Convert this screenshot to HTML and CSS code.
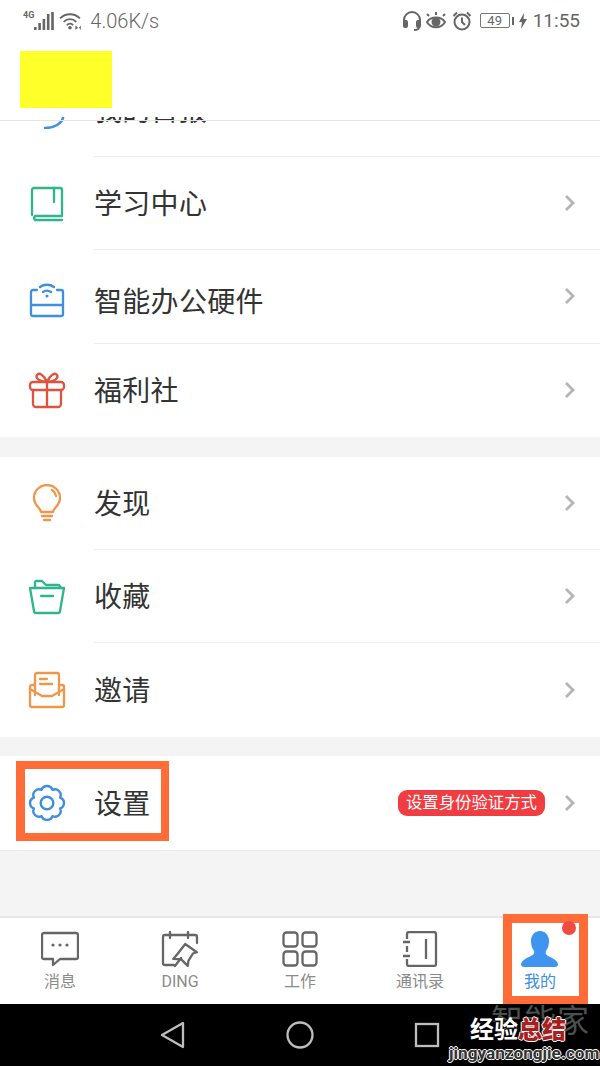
FILE: index.html
```html
<!DOCTYPE html>
<html lang="zh-CN">
<head>
    <meta charset="UTF-8">
    <title>我的</title>
    <link rel="stylesheet" href="styles.css">
</head>
<body>
    <div class="phone">
        <div class="status">
            <div class="status-side">
                <span class="net">4G</span>
                <svg width="20" height="18" viewBox="0 0 20 18"><g fill="#666"><rect x="0" y="15" width="2.600" height="3"/><rect x="4.300" y="11" width="2.600" height="7"/><rect x="8.600" y="7" width="2.600" height="11"/><rect x="12.900" y="2" width="2.600" height="16"/><rect x="17.200" y="0" width="2.600" height="18"/></g></svg>
                <svg width="22" height="18" viewBox="0 0 24 20" fill="none" stroke="#666" stroke-width="2"><path d="M1 7c6-6 16-6 22 0"/><path d="M5 11c4-4 10-4 14 0"/><path d="M8.500 14.500c2-2 5-2 7 0"/><circle cx="12" cy="17.500" r="2" fill="#666" stroke="none"/><path d="M18 15v5l3-2.500zM24 15v5l-2-2.500z" fill="#666" stroke="none"/></svg>
                <span class="speed">4.06K/s</span>
            </div>
            <div class="status-side">
                <svg width="20" height="22" viewBox="0 0 20 22" fill="none" stroke="#666" stroke-width="2"><path d="M2 14V10a8 8 0 0 1 16 0v4"/><rect x="2" y="11" width="3" height="6" rx="1" fill="#666"/><rect x="15" y="11" width="3" height="6" rx="1" fill="#666"/><path d="M17 17c0 2-2 3-5 3"/></svg>
                <svg class="eye" width="22" height="20" viewBox="0 0 22 20" fill="none" stroke="#666" stroke-width="2"><path d="M2 11c4-6 14-6 18 0-4 7-14 7-18 0z"/><circle cx="11" cy="11" r="3.500" fill="#666"/><path d="M4 5 2 3M11 4V1M18 5l2-2"/></svg>
                <svg width="20" height="20" viewBox="0 0 20 20" fill="none" stroke="#666" stroke-width="2"><circle cx="10" cy="11" r="7.500"/><path d="M10 6.500V11l3 3M1.500 5 5 1.500M18.500 5 15 1.500"/></svg>
                <div class="batt"><span class="batt-box">49</span><i class="batt-tip"></i></div>
                <svg width="8" height="16" viewBox="0 0 8 16"><path d="M5 0 0 9h3l-1 7 6-10H4.500z" fill="#666"/></svg>
                <span class="clock">11:55</span>
            </div>
        </div>

        <div class="head">
            <div class="head-mask"></div>
        </div>

        <div class="scroller">
            <div class="group group-clip">
                <div class="row row-cut">
                    <div class="ico">
                        <svg width="38" height="38" viewBox="0 0 38 38" fill="none" stroke="#3f8fdf" stroke-width="2.500" stroke-linecap="round"><path d="M35 27c-2 6-9 10-18 10"/></svg>
                    </div>
                    <div class="row-body"><span class="label">我的日报</span></div>
                </div>
            </div>
            <div class="group group-top">
                <div class="row">
                    <div class="ico">
                        <svg width="38" height="38" viewBox="0 0 38 38" fill="none" stroke="#2fb58a" stroke-width="2.300" stroke-linecap="round" stroke-linejoin="round"><path d="M4 30V5a2 2 0 0 1 2-2h26a2 2 0 0 1 2 2v26H7a3 3 0 0 0 0 4h27"/><path d="M26 3v14"/></svg>
                    </div>
                    <div class="row-body"><span class="label">学习中心</span><svg class="chev" width="14" height="20" viewBox="0 0 14 20"><path d="M3 3l7 7-7 7" fill="none" stroke="#b5b5b5" stroke-width="2.800"/></svg></div>
                </div>
                <div class="row row-b">
                    <div class="ico">
                        <svg width="38" height="38" viewBox="0 0 38 38" fill="none" stroke="#3f8fdf" stroke-width="2.300" stroke-linecap="round" stroke-linejoin="round"><path d="M9 10H5a2 2 0 0 0-2 2v22a2 2 0 0 0 2 2h28a2 2 0 0 0 2-2V12a2 2 0 0 0-2-2h-4"/><path d="M3 25h32"/><path d="M12 7c4-3 10-3 14 0"/><path d="M15 12c3-2 5-2 8 0"/><circle cx="19" cy="16" r="1.500" fill="#3f8fdf" stroke="none"/></svg>
                    </div>
                    <div class="row-body"><span class="label">智能办公硬件</span><svg class="chev" width="14" height="20" viewBox="0 0 14 20"><path d="M3 3l7 7-7 7" fill="none" stroke="#b5b5b5" stroke-width="2.800"/></svg></div>
                </div>
                <div class="row">
                    <div class="ico">
                        <svg width="38" height="38" viewBox="0 0 38 38" fill="none" stroke="#e0533f" stroke-width="2.300" stroke-linecap="round" stroke-linejoin="round"><rect x="2" y="11" width="34" height="8" rx="3"/><path d="M5 19v14a3 3 0 0 0 3 3h22a3 3 0 0 0 3-3V19"/><path d="M19 11v25"/><path d="M19 11c-3-7-8-10-10-7s3 7 10 7c7 0 12-4 10-7s-7 0-10 7z"/></svg>
                    </div>
                    <div class="row-body row-last"><span class="label">福利社</span><svg class="chev" width="14" height="20" viewBox="0 0 14 20"><path d="M3 3l7 7-7 7" fill="none" stroke="#b5b5b5" stroke-width="2.800"/></svg></div>
                </div>
            </div>

            <div class="group">
                <div class="row">
                    <div class="ico">
                        <svg width="38" height="38" viewBox="0 0 38 38" fill="none" stroke="#f0964a" stroke-width="2.300" stroke-linecap="round" stroke-linejoin="round"><path d="M13 28c0-4-7-6-7-14a13 13 0 0 1 26 0c0 8-7 10-7 14z"/><path d="M14 32h10M16 36h6"/><path d="M24 6c2 1 3 3 4 6"/></svg>
                    </div>
                    <div class="row-body"><span class="label">发现</span><svg class="chev" width="14" height="20" viewBox="0 0 14 20"><path d="M3 3l7 7-7 7" fill="none" stroke="#b5b5b5" stroke-width="2.800"/></svg></div>
                </div>
                <div class="row">
                    <div class="ico">
                        <svg width="38" height="38" viewBox="0 0 38 38" fill="none" stroke="#2fb58a" stroke-width="2.300" stroke-linecap="round" stroke-linejoin="round"><path d="M2 10h34l-4 23a2 2 0 0 1-2 2H8a2 2 0 0 1-2-2z"/><path d="M7 10V4a1.500 1.500 0 0 1 2-1h5l4 4h13l2 3"/><path d="M13 18h12"/></svg>
                    </div>
                    <div class="row-body"><span class="label">收藏</span><svg class="chev" width="14" height="20" viewBox="0 0 14 20"><path d="M3 3l7 7-7 7" fill="none" stroke="#b5b5b5" stroke-width="2.800"/></svg></div>
                </div>
                <div class="row">
                    <div class="ico">
                        <svg width="38" height="38" viewBox="0 0 38 38" fill="none" stroke="#f0964a" stroke-width="2.300" stroke-linecap="round" stroke-linejoin="round"><path d="M7 24V4a2 2 0 0 1 2-2h20a2 2 0 0 1 2 2v20"/><path d="M7 14H4a2 2 0 0 0-2 2v18a2 2 0 0 0 2 2h30a2 2 0 0 0 2-2V16a2 2 0 0 0-2-2h-3"/><path d="M2 18l12 7h10l12-7"/><path d="M12 8h7M12 13h12"/></svg>
                    </div>
                    <div class="row-body row-last"><span class="label">邀请</span><svg class="chev" width="14" height="20" viewBox="0 0 14 20"><path d="M3 3l7 7-7 7" fill="none" stroke="#b5b5b5" stroke-width="2.800"/></svg></div>
                </div>
            </div>

            <div class="group group-set">
                <div class="row">
                    <div class="ico">
                        <svg width="38" height="38" viewBox="0 0 36 36" fill="none" stroke="#3f8fdf" stroke-width="2.300" stroke-linejoin="round"><path d="M30.470 23.170A5.500 5.500 0 0 1 23.170 30.470A5.500 5.500 0 0 1 12.830 30.470A5.500 5.500 0 0 1 5.530 23.170A5.500 5.500 0 0 1 5.530 12.830A5.500 5.500 0 0 1 12.830 5.530A5.500 5.500 0 0 1 23.170 5.530A5.500 5.500 0 0 1 30.470 12.830A5.500 5.500 0 0 1 30.470 23.170z"/><circle cx="18" cy="18" r="6"/></svg>
                    </div>
                    <div class="row-body row-last"><span class="label">设置</span><span class="tip">设置身份验证方式</span><svg class="chev" width="14" height="20" viewBox="0 0 14 20"><path d="M3 3l7 7-7 7" fill="none" stroke="#b5b5b5" stroke-width="2.800"/></svg></div>
                </div>
                <div class="mark mark-set"></div>
            </div>
        </div>

        <div class="tabs">
            <div class="tab">
                <svg width="38" height="36" viewBox="0 0 38 36" fill="none" stroke="#666" stroke-width="2.300" stroke-linejoin="round"><path d="M3 2h32a2 2 0 0 1 2 2v22a2 2 0 0 1-2 2H19l-7 6v-6H3a2 2 0 0 1-2-2V4a2 2 0 0 1 2-2z"/><g fill="#666" stroke="none"><circle cx="12" cy="14" r="1.600"/><circle cx="19" cy="14" r="1.600"/><circle cx="26" cy="14" r="1.600"/></g></svg>
                <span>消息</span>
            </div>
            <div class="tab">
                <svg width="38" height="36" viewBox="0 0 38 36" fill="none" stroke="#666" stroke-width="2.300" stroke-linecap="round" stroke-linejoin="round"><path d="M13 34H4a2 2 0 0 1-2-2V6a2 2 0 0 1 2-2h30a2 2 0 0 1 2 2v6"/><path d="M9 1v6M27 1v6"/><path d="M25 13l11 9-4 1-5 7-1 5-6-7-8-1 5-5z" transform="rotate(-4 25 24)"/><path d="M14 35l6-8"/></svg>
                <span>DING</span>
            </div>
            <div class="tab">
                <svg width="36" height="36" viewBox="0 0 36 36" fill="none" stroke="#666" stroke-width="2.300"><rect x="1.500" y="1.500" width="14" height="14" rx="3"/><rect x="20.500" y="1.500" width="14" height="14" rx="3"/><rect x="1.500" y="20.500" width="14" height="14" rx="3"/><rect x="20.500" y="20.500" width="14" height="14" rx="3"/></svg>
                <span>工作</span>
            </div>
            <div class="tab">
                <svg width="36" height="36" viewBox="0 0 36 36" fill="none" stroke="#666" stroke-width="2.300" stroke-linejoin="round"><path d="M5 8V3a2 2 0 0 1 2-2h25a2 2 0 0 1 2 2v30a2 2 0 0 1-2 2H7a2 2 0 0 1-2-2v-5"/><path d="M1 11h7M1 25h7M5 15v6M24 8v20"/></svg>
                <span>通讯录</span>
            </div>
            <div class="tab tab-on">
                <svg width="38" height="36" viewBox="0 0 38 36"><path d="M13 20c-2-3-3-6-3-10C10 4 14 0 19 0s9 4 9 10c0 4-1 7-3 10-1 2 0 4 2 5 4 2 9 4 10 8 0 2-1 3-3 3H3c-2 0-3-1-3-3 1-4 6-6 10-8 2-1 4-3 3-5z" fill="#3e94ee"/></svg>
                <span>我的</span>
                <i class="dot"></i>
                <div class="mark mark-tab"></div>
            </div>
        </div>

        <div class="nav">
            <svg width="26" height="28" viewBox="0 0 26 28" fill="none" stroke="#bdbdbd" stroke-width="2.300" stroke-linejoin="round"><path d="M23 2v24L2 14z"/></svg>
            <svg width="28" height="28" viewBox="0 0 28 28" fill="none" stroke="#bdbdbd" stroke-width="2.300"><circle cx="14" cy="14" r="12.500"/></svg>
            <svg width="26" height="26" viewBox="0 0 26 26" fill="none" stroke="#bdbdbd" stroke-width="2.300"><rect x="2" y="2" width="22" height="22"/></svg>
            <div class="water">
                <span class="water-top">智能家</span>
                <span class="water-mid">经验<b>总结</b></span>
                <span class="water-url">jingyanzongjie.com</span>
            </div>
        </div>
    </div>
</body>
</html>
```

FILE: styles.css
```css
* {
    box-sizing: border-box;
}

body {
    margin: 0;
    font-family: "Roboto", "Noto Sans CJK SC", sans-serif;
}

.phone {
    position: relative;
    display: flex;
    flex-direction: column;
    width: 600px;
    height: 1066px;
    overflow: hidden;
    background-color: #f4f4f4;
}

.status {
    display: flex;
    justify-content: space-between;
    align-items: center;
    height: 41px;
    padding: 0 20px 0 23px;
    background-color: #fff;
    color: #666;
}

.status-side {
    display: flex;
    align-items: center;
    gap: 5px;
}

.net {
    align-self: flex-start;
    margin-top: 1px;
    margin-right: -5px;
    font-size: 9px;
    font-weight: 700;
}

.speed {
    margin-left: 4px;
    font-size: 20px;
    font-weight: 300;
}

.eye {
    margin-left: -2px;
}

.batt {
    display: flex;
    align-items: center;
    margin-left: 3px;
}

.batt-box {
    width: 30px;
    height: 15px;
    border: 1px solid #777;
    border-radius: 2px;
    font-size: 13px;
    line-height: 13px;
    text-align: center;
}

.batt-tip {
    width: 2px;
    height: 8px;
    margin-left: 2px;
    background-color: #666;
}

.clock {
    margin-left: 1px;
    font-size: 19px;
}

/* white only down to y=117, the cut row shows through under the line */
.head {
    position: relative;
    z-index: 2;
    height: 80px;
    border-bottom: 1px solid #e4e4e4;
    background: linear-gradient(#fff 76px, transparent 76px);
}

.head-mask {
    width: 92px;
    height: 57px;
    margin: 10px 0 0 20px;
    background-color: #ffff2a;
}

.scroller {
    flex: 1;
    display: flex;
    flex-direction: column;
}

.group {
    position: relative;
    margin-top: 19.500px;
    background-color: #fff;
}

.group-clip {
    flex: none;
    height: 40px;
    margin-top: -4px;
    overflow: hidden;
}

.group-top {
    margin-top: 0;
}

.row {
    display: flex;
    align-items: center;
    height: 93.400px;
}

.row-cut {
    margin-top: -53.400px;
}

.ico {
    display: flex;
    justify-content: center;
    align-items: center;
    width: 94px;
    height: 100%;
}

.row-body {
    flex: 1;
    display: flex;
    align-items: center;
    height: 100%;
    padding-right: 23px;
    border-bottom: 1px solid #eee;
}

.row-last {
    border-bottom: none;
}

.row-b .label {
    margin-top: 6px;
}

.row-b .ico svg {
    margin-top: 3px;
}

.row-b .chev {
    margin-top: -2px;
}

.label {
    flex: 1;
    margin-top: -2px;
    color: #333;
    font-size: 28px;
    letter-spacing: 0.300px;
}

.tip {
    height: 26px;
    margin-right: 18px;
    padding: 0 8px;
    border-radius: 9px;
    background-color: #ef3d42;
    color: #fff;
    font-size: 16.400px;
    line-height: 26px;
}

.group-set {
    border-bottom: 1px solid #eaeaea;
}

.mark {
    position: absolute;
    border: solid #ff6c37;
    border-width: 8px 8px 8px 9px;
}

.mark-set {
    top: 5px;
    left: 16px;
    width: 153px;
    height: 80px;
}

.tabs {
    display: flex;
    height: 88px;
    border-top: 2px solid #e6e6e6;
    background-color: #fff;
}

.tab {
    position: relative;
    flex: 1;
    display: flex;
    flex-direction: column;
    align-items: center;
    padding-top: 13px;
    color: #8b8b8b;
    font-size: 16px;
}

.tab span {
    margin-top: 5px;
    line-height: 20px;
}

.tab-on {
    color: #3e8fe0;
}

.dot {
    position: absolute;
    top: 3px;
    right: 24px;
    z-index: 1;
    width: 14px;
    height: 14px;
    border-radius: 50%;
    background-color: #ee4b43;
}

.mark-tab {
    top: -4px;
    left: 23px;
    width: 85px;
    height: 91px;
    border-width: 9px;
}

.nav {
    position: relative;
    display: flex;
    justify-content: space-between;
    align-items: center;
    height: 62px;
    padding: 0 160px;
    background-color: #000;
}

.water {
    position: absolute;
    top: 0;
    right: 0;
    width: 151px;
    height: 62px;
}

.water-top {
    position: absolute;
    top: 0;
    right: 10px;
    color: #4a4f4f;
    font-size: 32px;
    line-height: 34px;
    letter-spacing: 1px;
}

.water-mid {
    position: absolute;
    top: 12px;
    left: 21px;
    color: #fff;
    font-size: 24px;
    font-weight: 700;
    line-height: 28px;
    text-shadow: 1px 1px 0 #000, -1px 1px 0 #000;
}

.water-mid b {
    color: #a81f1f;
    text-shadow: 1px 0 0 #fff, -1px 0 0 #fff, 0 1px 0 #fff, 0 -1px 0 #fff;
}

.water-url {
    position: absolute;
    top: 40px;
    left: 0;
    color: #333;
    font-size: 17.200px;
    font-weight: 700;
    line-height: 18px;
    white-space: nowrap;
    text-shadow: 1px 0 0 #fff, -1px 0 0 #fff, 0 1px 0 #fff, 0 -1px 0 #fff;
}
```
